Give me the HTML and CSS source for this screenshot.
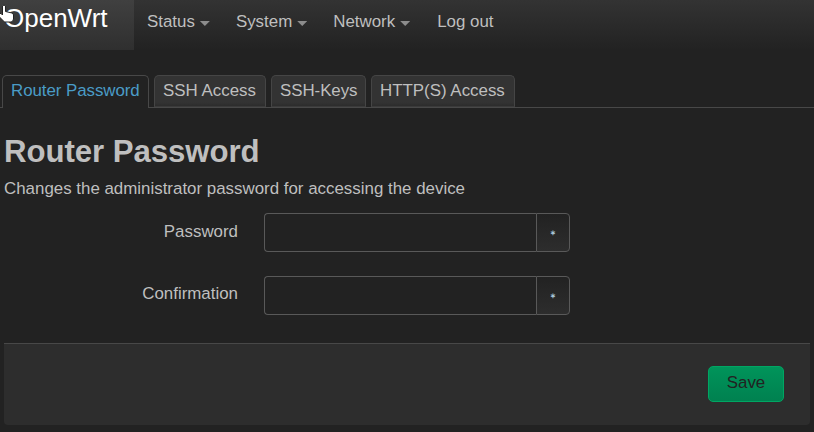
FILE: index.html
```html
<!DOCTYPE html>
<html lang="en">
<head>
<meta charset="utf-8">
<title>OpenWrt - Router Password</title>
<link rel="stylesheet" href="styles.css">
</head>
<body>
<header class="navbar">
  <a class="brand">OpenWrt</a>
  <nav class="menu">
    <a class="menu-item">Status<i class="caret"></i></a>
    <a class="menu-item">System<i class="caret"></i></a>
    <a class="menu-item">Network<i class="caret"></i></a>
    <a class="menu-item logout">Log out</a>
  </nav>
</header>
<svg class="pointer" width="15" height="20" viewBox="0 0 15 20"><path d="M2.500 2Q4 0 5.500 2V7.500L12 9Q13.500 9.500 13.500 11V15Q13 18 11 18H4.500L-1 12.500V9.500H1L2.500 11Z" fill="#fff" stroke="#222" stroke-width="1"/></svg>
<ul class="tabs">
  <li class="tab active">Router Password</li>
  <li class="tab ssh">SSH Access</li>
  <li class="tab keys">SSH-Keys</li>
  <li class="tab http">HTTP(S) Access</li>
</ul>
<main class="content">
  <h2 class="title">Router Password</h2>
  <p class="description">Changes the administrator password for accessing the device</p>
  <form>
    <div class="row">
      <label class="label first" for="pw1">Password</label>
      <div class="group"><input id="pw1" class="field" type="password"><button class="reveal" type="button">∗</button></div>
    </div>
    <div class="row">
      <label class="label" for="pw2">Confirmation</label>
      <div class="group"><input id="pw2" class="field" type="password"><button class="reveal" type="button">∗</button></div>
    </div>
    <div class="actions"><button class="save" type="button">Save</button></div>
  </form>
</main>
</body>
</html>
```
FILE: styles.css
```css
* { box-sizing: border-box; }
body {
  margin: 0;
  height: 432px;
  overflow: hidden;
  background: #222;
  color: #bfbfbf;
  font: 16.9px/24px "Liberation Sans", Arial, sans-serif;
}
.navbar {
  display: flex;
  height: 50px;
  background: linear-gradient(#333, #222);
}
.brand {
  width: 134px;
  padding: 6px 0 0 4px;
  background: linear-gradient(#404040, #2f2f2f);
  color: #fff;
  font-size: 26px;
}
.menu { display: flex; gap: 26px; padding: 10px 0 0 13px; }
.menu-item { display: flex; }
.logout { margin-left: 1px; }
.caret {
  width: 10px;
  height: 5px;
  margin: 11px 0 0 5px;
  background: #8c8c8c;
  clip-path: polygon(0 0, 100% 0, 50% 100%);
}
.pointer { position: absolute; left: 0; top: 4px; }
.tabs {
  display: flex;
  gap: 5px;
  height: 33px;
  margin: 25px 0 0;
  padding: 0 2px;
  list-style: none;
  border-bottom: 1px solid #484848;
}
.tab {
  height: 32px;
  padding: 3px 8px 0;
  border: 1px solid #454545;
  border-bottom-color: #3a3a3a;
  border-radius: 5px 5px 0 0;
  background: linear-gradient(#333 88%, #2c2c2c);
  white-space: nowrap;
}
.tab.active {
  width: 147px;
  height: 33px;
  background: #222;
  border-color: #484848;
  border-bottom: 0;
  color: #4a9cc7;
  letter-spacing: -0.06px;
}
.tab.ssh { width: 112px; }
.tab.keys { width: 95px; letter-spacing: -0.05px; }
.tab.http { width: 144px; }
.content { padding: 0 4px; }
.title { margin: 26px 0 0; font-size: 31.2px; line-height: 36px; letter-spacing: -0.06px; }
.description { margin: 7px 0 13px; line-height: 23px; }
.row { display: flex; height: 39px; margin-bottom: 24px; }
.label { width: 234px; padding-top: 6px; text-align: right; }
.label.first { padding-top: 7px; }
.group { display: flex; margin-left: 26px; }
.field {
  width: 272px;
  height: 39px;
  border: 1px solid #595959;
  border-right: 0;
  border-radius: 4px 0 0 4px;
  background: #222;
}
.reveal {
  width: 34px;
  height: 39px;
  padding: 0;
  border: 1px solid #595959;
  border-radius: 0 4px 4px 0;
  background: linear-gradient(#222, #2d2d2d);
  color: #a9c4d8;
  font: bold 7px "Liberation Sans", sans-serif;
}
.actions {
  display: flex;
  justify-content: flex-end;
  height: 82px;
  margin-top: 28px;
  padding: 22px 26px;
  border-top: 1px solid #484848;
  border-radius: 0 0 4px 4px;
  background: #2d2d2d;
}
.save {
  width: 76px;
  height: 36px;
  padding: 0 0 2px;
  border: 1px solid #00a663;
  border-radius: 5px;
  background: linear-gradient(#00945a, #008150);
  color: #222;
  font: 16.9px "Liberation Sans", Arial, sans-serif;
}
```
